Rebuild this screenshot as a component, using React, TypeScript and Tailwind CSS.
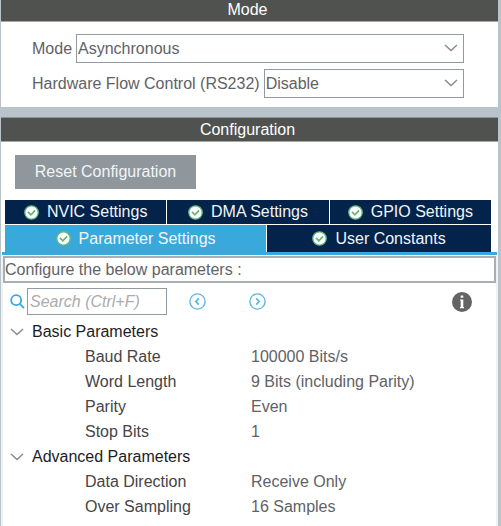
import type { ReactNode } from "react";

const params = [
  {
    title: "Basic Parameters",
    rows: [
      ["Baud Rate", "100000 Bits/s"],
      ["Word Length", "9 Bits (including Parity)"],
      ["Parity", "Even"],
      ["Stop Bits", "1"],
    ],
  },
  {
    title: "Advanced Parameters",
    rows: [
      ["Data Direction", "Receive Only"],
      ["Over Sampling", "16 Samples"],
    ],
  },
];

function Chevron({ className = "" }: { className?: string }) {
  return (
    <svg className={`h-2 w-[14px] ${className}`} viewBox="0 0 14 8" fill="none" stroke="#8b8d90" strokeWidth="1.6" aria-hidden="true">
      <path d="M1 1l6 5.5L13 1" />
    </svg>
  );
}

function CheckBadge() {
  return (
    <svg className="size-[15px] shrink-0" viewBox="0 0 15 15" fill="none" aria-hidden="true">
      <circle cx="7.5" cy="7.5" r="6.7" fill="#fff" stroke="#62b981" strokeWidth="1.3" />
      <path d="M4 6.8l2.9 3 4.2-4.4" stroke="#5fb87c" strokeWidth="1.7" />
    </svg>
  );
}

function Tab({ children, active = false }: { children: ReactNode; active?: boolean }) {
  return (
    <button
      type="button"
      role="tab"
      aria-selected={active}
      className={`flex items-center justify-center gap-2 whitespace-nowrap text-[#f2f5f8] ${active ? "bg-[#39a9dc]" : "bg-[#03234b]"}`}
    >
      <CheckBadge />
      {children}
    </button>
  );
}

function Field({ id, label, value, options }: { id: string; label: string; value: string; options: string[] }) {
  return (
    <div className="flex items-center gap-1">
      <label htmlFor={id} className="whitespace-nowrap">{label}</label>
      <div className="relative grow">
        <select id={id} defaultValue={value} className="block h-[29px] w-full appearance-none border border-[#92999f] bg-white px-px">
          {options.map((o) => (
            <option key={o}>{o}</option>
          ))}
        </select>
        <Chevron className="pointer-events-none absolute top-[10px] right-[6px]" />
      </div>
    </div>
  );
}

function StepButton({ label, d }: { label: string; d: string }) {
  return (
    <button type="button" aria-label={label} className="size-[17px]">
      <svg viewBox="0 0 17 17" fill="none" stroke="#5cb8e4" aria-hidden="true">
        <circle cx="8.5" cy="8.5" r="7.6" strokeWidth="1.4" />
        <path d={d} strokeWidth="1.8" />
      </svg>
    </button>
  );
}

export default function App() {
  return (
    <main className="min-h-screen bg-[#b9c4ca] pr-[3px] pl-px font-['Liberation_Sans',Arial,sans-serif] text-base leading-5 text-[#606266]">
      <section className="bg-white">
        <h2 className="h-[22px] border-b border-[#a5a7a6] bg-[#505250] pr-1 text-center leading-[19px] text-white">Mode</h2>
        <div className="flex flex-col gap-[6px] pt-3 pr-[34px] pb-[9px] pl-[31px]">
          <Field id="mode" label="Mode" value="Asynchronous" options={["Disable", "Asynchronous", "Synchronous"]} />
          <Field id="flow" label="Hardware Flow Control (RS232)" value="Disable" options={["Disable", "CTS Only", "RTS Only", "CTS/RTS"]} />
        </div>
      </section>

      <section className="mt-[10px] flex min-h-[409px] flex-col bg-white">
        <h2 className="h-[25px] border-y border-t-[#8c9599] border-b-[#a5a7a6] bg-[#505250] pr-1 text-center leading-[23px] text-white">Configuration</h2>
        <div className="px-[14px] pt-[13px] pb-[11px]">
          <button type="button" className="h-[34px] w-[181px] bg-[#8f979c] text-[#f2f5f8]">Reset Configuration</button>
        </div>

        <div role="tablist" className="pr-[7px] pl-1">
          <div className="mb-px grid h-6 grid-cols-3 gap-px">
            <Tab>NVIC Settings</Tab>
            <Tab>DMA Settings</Tab>
            <Tab>GPIO Settings</Tab>
          </div>
          <div className="grid h-[27px] grid-cols-[7fr_6fr] gap-px">
            <Tab active>Parameter Settings</Tab>
            <Tab>User Constants</Tab>
          </div>
        </div>

        <div className="mr-px ml-px h-[3px] bg-[#39a9dc]" />
        <div className="grow border-x-2 border-[#eef2f4] pt-px">
          <p className="h-[27px] border-2 border-[#a9aeb3] leading-[23px]">Configure the below parameters :</p>
          <div className="mt-[5px] flex items-center pr-6 pl-[7px]">
            <svg className="mr-[2px] size-[15px]" viewBox="0 0 15 15" fill="none" stroke="#39a9dc" strokeWidth="1.8" aria-hidden="true">
              <circle cx="6.2" cy="6.2" r="5" />
              <path d="M9.8 9.8l4.2 4.4" />
            </svg>
            <input
              type="text"
              aria-label="Search"
              placeholder="Search (Ctrl+F)"
              className="mr-[22px] h-[27px] w-[140px] border border-[#92999f] px-[2px] italic placeholder:text-[#aaacae]"
            />
            <StepButton label="Previous match" d="M9.8 5.4L6.9 8.5l2.9 3.1" />
            <span className="w-[43px]" />
            <StepButton label="Next match" d="M7.2 5.4l2.9 3.1-2.9 3.1" />
            <button type="button" aria-label="Information" className="ml-auto size-5">
              <svg viewBox="0 0 20 20" aria-hidden="true">
                <circle cx="10" cy="10" r="10" fill="#646464" />
                <path d="M8.7 3.4h2.6v2.4H8.7zM8 7.4h3.3V15H12v1.2H8V15h.7V8.6H8z" fill="#fff" />
              </svg>
            </button>
          </div>

          <table className="mt-1 w-full table-fixed text-left">
            <colgroup>
              <col className="w-[248px]" />
              <col />
            </colgroup>
            {params.map((group) => (
              <tbody key={group.title}>
                <tr className="h-[25px]">
                  <th colSpan={2} scope="rowgroup" className="p-0 font-normal text-[#1d1d1f]">
                    <button type="button" aria-expanded="true" className="flex items-center gap-2 pl-[7px]">
                      <Chevron />
                      {group.title}
                    </button>
                  </th>
                </tr>
                {group.rows.map(([name, value]) => (
                  <tr key={name} className="h-[25px]">
                    <th scope="row" className="p-0 pl-[82px] font-normal text-[#454547]">{name}</th>
                    <td className="p-0">{value}</td>
                  </tr>
                ))}
              </tbody>
            ))}
          </table>
        </div>
      </section>
    </main>
  );
}
